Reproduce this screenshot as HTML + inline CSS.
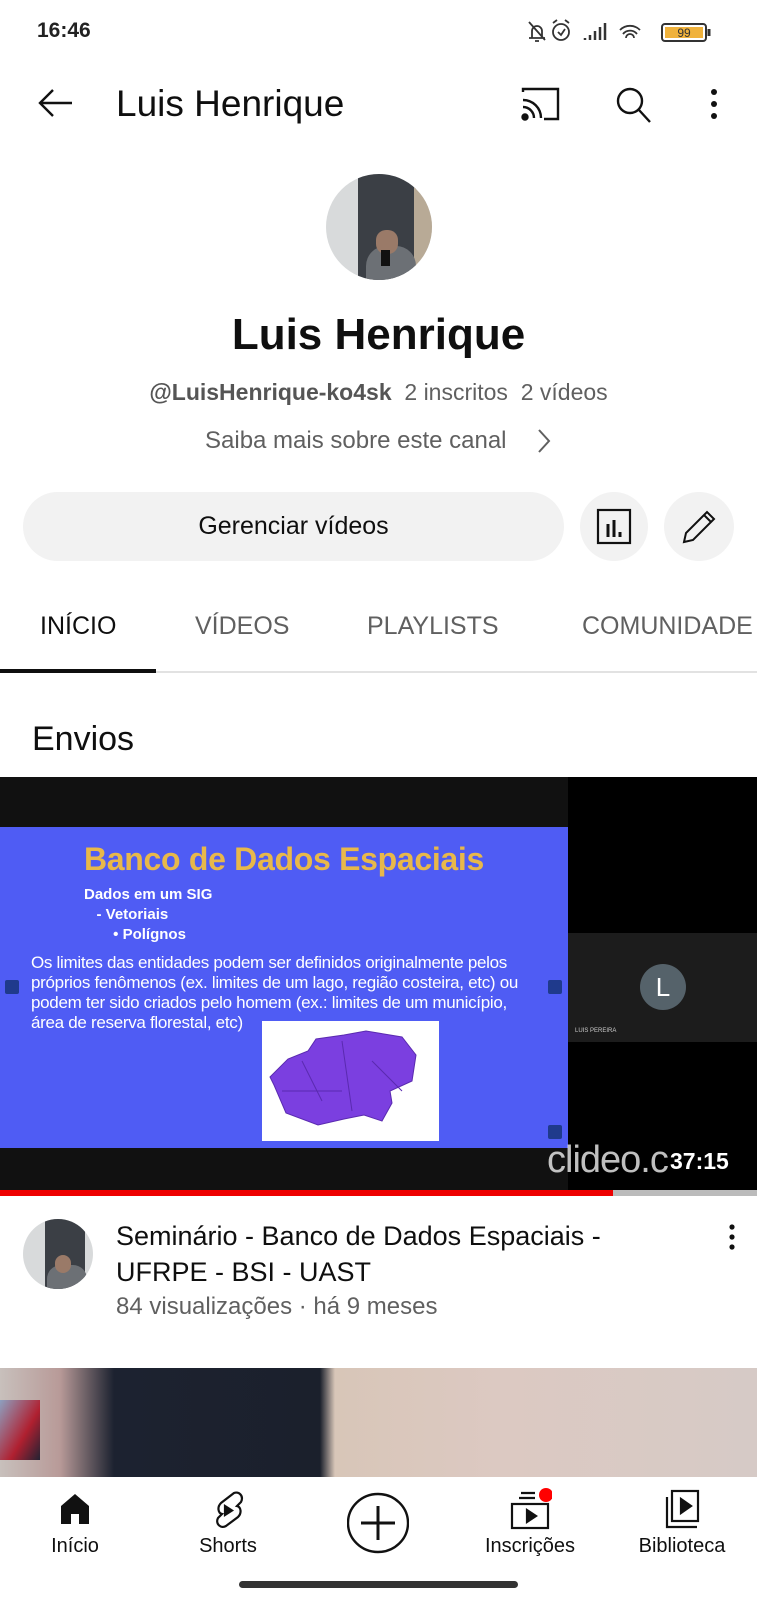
<!DOCTYPE html>
<html><head><meta charset="utf-8"><style>
*{margin:0;padding:0;box-sizing:border-box}
body{width:757px;height:1600px;overflow:hidden;background:#fff;font-family:"Liberation Sans",sans-serif;position:relative;color:#0f0f0f}
.a{position:absolute;white-space:nowrap}
</style></head><body>
<div class="a" style="left:37px;top:19px;font-size:21px;font-weight:bold;color:#222">16:46</div>
<svg class="a" style="left:525px;top:18px" width="200" height="28" viewBox="0 0 200 28" fill="none" stroke="#333" stroke-width="1.8">
<path d="M4 20h16M7 20v-7a5 5 0 0 1 10 0v7M10 23h4M4 4l16 18"/>
<circle cx="36" cy="14" r="8"/><path d="M33 14l3 3 4-6M28 5l4-3M44 5l-4-3"/>
<path d="M60 22v-2M65 22v-5M70 22v-9M75 22v-13M80 22v-17" stroke-width="2.5"/>
<path d="M95 12a14 14 0 0 1 20 0M98 16a9 9 0 0 1 14 0M101 20a4 4 0 0 1 8 0"/>
<rect x="137" y="6" width="44" height="17" rx="3" stroke-width="2"/><rect x="140" y="9" width="38" height="11" fill="#f0b23c" stroke="none"/><text x="159" y="19" font-size="12" text-anchor="middle" fill="#333" stroke="none" font-family="Liberation Sans">99</text><path d="M184 11v7" stroke-width="3"/>
</svg>
<svg class="a" style="left:36px;top:86px" width="40" height="34" viewBox="0 0 40 34" fill="none" stroke="#111" stroke-width="2.4"><path d="M36 17H4M17 4L4 17l13 13"/></svg>
<div class="a" style="left:116px;top:83px;font-size:37px;color:#0f0f0f">Luis Henrique</div>
<svg class="a" style="left:520px;top:86px" width="42" height="36" viewBox="0 0 42 36" fill="none" stroke="#111" stroke-width="2.4"><path d="M3 6V3h35v30H24"/><path d="M3 14a18 18 0 0 1 18 18M3 21a11 11 0 0 1 11 11"/><circle cx="5" cy="31" r="2.5" fill="#111"/></svg>
<svg class="a" style="left:614px;top:86px" width="40" height="38" viewBox="0 0 40 38" fill="none" stroke="#111" stroke-width="2.4"><circle cx="16" cy="15" r="12"/><path d="M25 24l11 12"/></svg>
<svg class="a" style="left:706px;top:88px" width="16" height="34"><circle cx="8" cy="4" r="3" fill="#111"/><circle cx="8" cy="16" r="3" fill="#111"/><circle cx="8" cy="28" r="3" fill="#111"/></svg>
<!-- avatar -->
<div class="a" style="left:326px;top:174px;width:106px;height:106px;border-radius:50%;overflow:hidden;background:#d8dadb">
<div style="position:absolute;left:32px;top:0;width:58px;height:106px;background:#3b3f45"></div>
<div style="position:absolute;left:88px;top:0;width:18px;height:106px;background:#b8aa96"></div>
<div style="position:absolute;left:40px;top:72px;width:50px;height:40px;border-radius:20px 20px 0 0;background:#6c7075"></div>
<div style="position:absolute;left:50px;top:56px;width:22px;height:24px;border-radius:10px;background:#9a7a68"></div>
<div style="position:absolute;left:55px;top:76px;width:9px;height:16px;background:#111"></div>
</div>
<div class="a" style="left:0;width:757px;text-align:center;top:310px;font-size:44px;font-weight:bold">Luis Henrique</div>
<div class="a" style="left:0;width:757px;text-align:center;top:379px;font-size:23px;color:#606060"><span style="font-weight:bold;color:#555">@LuisHenrique-ko4sk</span>&nbsp; 2 inscritos &nbsp;2 vídeos</div>
<div class="a" style="left:205px;top:427px;font-size:24px;color:#606060">Saiba mais sobre este canal</div>
<svg class="a" style="left:536px;top:428px" width="16" height="26" fill="none" stroke="#606060" stroke-width="2"><path d="M3 2l10 11L3 24"/></svg>
<!-- buttons -->
<div class="a" style="left:23px;top:492px;width:541px;height:69px;border-radius:35px;background:#f2f2f2;text-align:center;line-height:69px;font-size:25px">Gerenciar vídeos</div>
<div class="a" style="left:580px;top:492px;width:68px;height:69px;border-radius:50%;background:#f2f2f2"></div>
<svg class="a" style="left:596px;top:508px" width="36" height="38" fill="none" stroke="#111" stroke-width="2.2"><rect x="2" y="2" width="32" height="33"/><path d="M12 16v13M18 12v17M24 24v5" stroke-width="3"/></svg>
<div class="a" style="left:664px;top:492px;width:70px;height:69px;border-radius:50%;background:#f2f2f2"></div>
<svg class="a" style="left:680px;top:508px" width="38" height="38" fill="none" stroke="#111" stroke-width="2"><path d="M4 34l2-9L27 4l7 7-21 21z M24 7l7 7"/></svg>
<!-- tabs -->
<div class="a" style="left:40px;top:612px;font-size:25px;color:#0f0f0f">INÍCIO</div>
<div class="a" style="left:195px;top:612px;font-size:25px;color:#606060">VÍDEOS</div>
<div class="a" style="left:367px;top:612px;font-size:25px;color:#606060">PLAYLISTS</div>
<div class="a" style="left:582px;top:612px;font-size:25px;color:#606060">COMUNIDADE</div>
<div class="a" style="left:0;top:671px;width:757px;height:2px;background:#e2e2e2"></div>
<div class="a" style="left:0;top:669px;width:156px;height:4px;background:#0f0f0f"></div>
<div class="a" style="left:32px;top:720px;font-size:34px">Envios</div>
<!-- thumbnail -->
<div class="a" style="left:0;top:777px;width:757px;height:413px;background:#111;overflow:hidden">
<div class="a" style="left:568px;top:0;width:189px;height:413px;background:#000"></div>
<div class="a" style="left:568px;top:156px;width:189px;height:109px;background:#1c1c1c"></div>
<div class="a" style="left:640px;top:187px;width:46px;height:46px;border-radius:50%;background:#55626a;color:#fff;font-size:26px;text-align:center;line-height:46px">L</div>
<div class="a" style="left:575px;top:251px;font-size:6px;color:#ccc">LUIS PEREIRA</div>
<div class="a" style="left:0;top:50px;width:568px;height:321px;background:#4f5cf4">
<div class="a" style="left:0;width:568px;text-align:center;top:14px;font-size:32px;font-weight:bold;color:#e8b84a;letter-spacing:-0.3px">Banco de Dados Espaciais</div>
<div class="a" style="left:84px;top:58px;font-size:15px;font-weight:bold;color:#fff;line-height:20px">Dados em um SIG<br>&nbsp;&nbsp;&nbsp;- Vetoriais<br>&nbsp;&nbsp;&nbsp;&nbsp;&nbsp;&nbsp;&nbsp;• Polígnos</div>
<div class="a" style="left:31px;top:126px;font-size:17px;color:#fff;line-height:20px;letter-spacing:-0.3px">Os limites das entidades podem ser definidos originalmente pelos<br>próprios fenômenos (ex. limites de um lago, região costeira, etc) ou<br>podem ter sido criados pelo homem (ex.: limites de um município,<br>área de reserva florestal, etc)</div>
<div class="a" style="left:5px;top:153px;width:14px;height:14px;background:#1f3a8c;border-radius:2px"></div>
<div class="a" style="left:548px;top:153px;width:14px;height:14px;background:#1f3a8c;border-radius:2px"></div>
<div class="a" style="left:548px;top:298px;width:14px;height:14px;background:#1f3a8c;border-radius:2px"></div>
<div class="a" style="left:262px;top:194px;width:177px;height:120px;background:#fff">
<svg width="177" height="120"><path d="M8 56l18-18 20-8 8-12 28-4 22-4 36 6 14 18-4 26-22 10 2 12-10 18-18-6-20 4-26 6-32-12-12-28z" fill="#7b3fe0" stroke="#5a2ab0" stroke-width="1"/><path d="M40 40l20 40M80 20l10 70M110 40l30 30M20 70l60 0" stroke="#5a2ab0" stroke-width="1" fill="none"/></svg>
</div>
</div>
<div class="a" style="left:547px;top:362px;font-size:38px;color:rgba(255,255,255,0.75);letter-spacing:-1px">clideo.c</div>
<div class="a" style="left:670px;top:371px;font-size:23px;font-weight:bold;color:#fff">37:15</div>
</div>
<div class="a" style="left:0;top:1190px;width:757px;height:6px;background:#bbb"></div>
<div class="a" style="left:0;top:1190px;width:613px;height:6px;background:#e00"></div>
<!-- video info -->
<div class="a" style="left:23px;top:1219px;width:70px;height:70px;border-radius:50%;overflow:hidden;background:#d8dadb">
<div style="position:absolute;left:22px;top:0;width:40px;height:70px;background:#3b3f45"></div>
<div style="position:absolute;left:24px;top:46px;width:40px;height:30px;border-radius:14px 14px 0 0;background:#6c7075"></div>
<div style="position:absolute;left:32px;top:36px;width:16px;height:18px;border-radius:8px;background:#9a7a68"></div>
</div>
<div class="a" style="left:116px;top:1218px;font-size:27px;line-height:36px">Seminário - Banco de Dados Espaciais -<br>UFRPE - BSI - UAST</div>
<div class="a" style="left:116px;top:1293px;font-size:24px;color:#606060">84 visualizações · há 9 meses</div>
<svg class="a" style="left:726px;top:1222px" width="12" height="34"><circle cx="6" cy="5" r="2.6" fill="#111"/><circle cx="6" cy="15" r="2.6" fill="#111"/><circle cx="6" cy="25" r="2.6" fill="#111"/></svg>
<!-- second thumb -->
<div class="a" style="left:0;top:1368px;width:757px;height:109px;background:linear-gradient(90deg,#c8c0bc 0,#b89a98 60px,#1c2230 114px,#1b202c 320px,#d8c6b8 335px,#dcc9c2 500px,#d6cac6 757px)"></div>
<div class="a" style="left:0;top:1400px;width:40px;height:60px;background:linear-gradient(120deg,#8da0c0,#b02030 60%,#223)"></div>
<!-- nav -->
<div class="a" style="left:0;top:1477px;width:757px;height:123px;background:#fff"></div>
<svg class="a" style="left:59px;top:1492px" width="32" height="34"><path d="M16 2L2 14v18h10V22h8v10h10V14z" fill="#111"/></svg>
<svg class="a" style="left:210px;top:1490px" width="36" height="40" fill="none" stroke="#111" stroke-width="2.2"><path d="M24 3c5-2 10 3 7 9l-4 4c4 1 5 7 1 11l-12 9c-5 3-11-2-8-8l4-4c-4-1-5-7-1-11z"/><path d="M15 16v9l7-4.5z" fill="#111"/></svg>
<svg class="a" style="left:347px;top:1492px" width="62" height="62" fill="none" stroke="#111" stroke-width="2.4"><ellipse cx="31" cy="31" rx="30" ry="29"/><path d="M31 14v34M14 31h34" stroke-width="3"/></svg>
<svg class="a" style="left:510px;top:1488px" width="42" height="42" fill="none" stroke="#111" stroke-width="2.2"><path d="M11 5h14M9 10h16"/><rect x="2" y="16" width="36" height="24"/><path d="M17 22v12l9-6z" fill="#111"/><circle cx="36" cy="7" r="7" fill="#f00" stroke="none"/></svg>
<svg class="a" style="left:664px;top:1489px" width="38" height="40" fill="none" stroke="#111" stroke-width="2.2"><rect x="8" y="2" width="26" height="30"/><path d="M3 8v30h30"/><path d="M17 10v14l10-7z" fill="#111"/></svg>
<div class="a" style="left:0;width:150px;text-align:center;top:1535px;font-size:20px">Início</div>
<div class="a" style="left:153px;width:150px;text-align:center;top:1535px;font-size:20px">Shorts</div>
<div class="a" style="left:455px;width:150px;text-align:center;top:1535px;font-size:20px">Inscrições</div>
<div class="a" style="left:607px;width:150px;text-align:center;top:1535px;font-size:20px">Biblioteca</div>
<div class="a" style="left:239px;top:1581px;width:279px;height:7px;border-radius:4px;background:#333"></div>
</body></html>
